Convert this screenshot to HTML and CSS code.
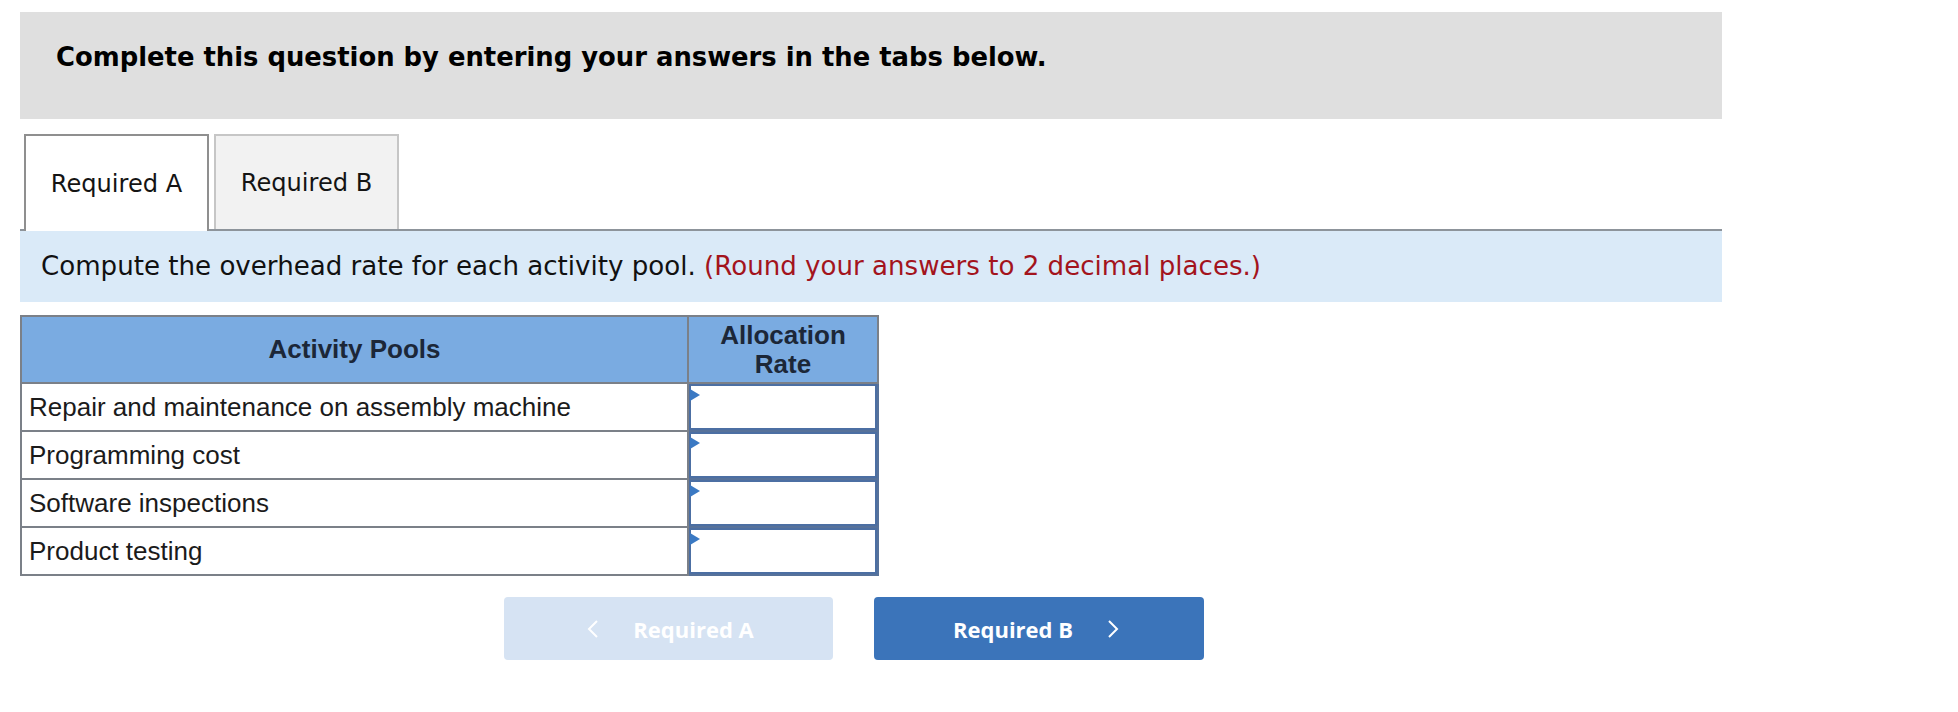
FILE: index.html
```html
<!DOCTYPE html>
<html lang="en">
<head>
<meta charset="utf-8">
<title>Activity Pools</title>
<link rel="stylesheet" href="styles.css">
</head>
<body>
<div class="page">
  <div class="banner">
    <h1 class="banner-title">Complete this question by entering your answers in the tabs below.</h1>
  </div>

  <div class="tabs">
    <div class="tab tab-active">Required A</div>
    <div class="tab">Required B</div>
  </div>

  <div class="instruction">Compute the overhead rate for each activity pool. <span class="note">(Round your answers to 2 decimal places.)</span></div>

  <table class="grid">
    <thead>
      <tr class="head-row">
        <th class="col-name">Activity Pools</th>
        <th class="col-rate">Allocation<br>Rate</th>
      </tr>
    </thead>
    <tbody>
      <tr class="body-row">
        <td class="name">Repair and maintenance on assembly machine</td>
        <td class="rate"><div class="inp"></div></td>
      </tr>
      <tr class="body-row">
        <td class="name">Programming cost</td>
        <td class="rate"><div class="inp"></div></td>
      </tr>
      <tr class="body-row">
        <td class="name">Software inspections</td>
        <td class="rate"><div class="inp"></div></td>
      </tr>
      <tr class="body-row">
        <td class="name">Product testing</td>
        <td class="rate"><div class="inp"></div></td>
      </tr>
    </tbody>
  </table>

  <div class="nav">
    <button class="nav-btn nav-prev" type="button">
      <svg class="chev" width="12" height="20" viewBox="0 0 12 20"><polyline points="10,2 2,10 10,18" fill="none" stroke="#ffffff" stroke-width="2"/></svg>
      <span>Required A</span>
    </button>
    <button class="nav-btn nav-next" type="button">
      <span>Required B</span>
      <svg class="chev" width="12" height="20" viewBox="0 0 12 20"><polyline points="2,2 10,10 2,18" fill="none" stroke="#ffffff" stroke-width="2"/></svg>
    </button>
  </div>
</div>
</body>
</html>
```

FILE: styles.css
```css
html, body {
  margin: 0;
  padding: 0;
  background: #ffffff;
}

.page {
  width: 1702px;
  margin-left: 20px;
  padding-top: 12px;
  font-family: "DejaVu Sans", Verdana, sans-serif;
  color: #1a1a1a;
}

.banner {
  background: #dfdfdf;
  height: 107px;
  box-sizing: border-box;
  padding: 29px 0 0 36px;
}

.banner-title {
  margin: 0;
  font-family: "DejaVu Sans", Verdana, sans-serif;
  font-weight: bold;
  font-size: 25.85px;
  line-height: 32px;
  color: #000000;
}

.tabs {
  display: flex;
  gap: 5px;
  padding-left: 4px;
  margin-top: 15px;
  height: 95px;
  border-bottom: 2px solid #8d949b;
}

.tab {
  width: 185px;
  box-sizing: border-box;
  display: flex;
  align-items: center;
  justify-content: center;
  font-size: 24.1px;
  color: #141414;
  background: #f2f2f2;
  border: 2px solid #c6c6c6;
  border-bottom: none;
}

.tab-active {
  background: #ffffff;
  border-color: #8f8f8f;
  height: 97px;
  margin-bottom: -2px;
}

.instruction {
  background: #daeaf8;
  height: 71px;
  line-height: 71px;
  padding-left: 21px;
  font-size: 26.1px;
  color: #111111;
  white-space: nowrap;
}

.note {
  color: #a3141d;
}

.grid {
  margin-top: 13px;
  border-collapse: collapse;
  width: 855px;
  table-layout: fixed;
  font-family: "Liberation Sans", Arial, sans-serif;
}

.col-name {
  width: 665px;
}

.col-rate {
  width: 188px;
}

.grid th {
  background: #7aabe1;
  border: 2px solid #7b8088;
  font-weight: bold;
  font-size: 26px;
  line-height: 29px;
  color: #1c2738;
  height: 65px;
  padding: 0;
  text-align: center;
}

.grid td {
  border: 2px solid #7b8088;
  font-size: 26px;
  color: #1b1b1b;
  height: 46px;
  padding: 0 7px;
  white-space: nowrap;
}

.grid td.rate {
  padding: 0;
  border-color: #57729a;
  vertical-align: top;
}

.inp {
  position: relative;
  height: 46px;
  box-sizing: border-box;
  border: 2px solid #4c6fa3;
  background: #ffffff;
}

.inp::before {
  content: "";
  position: absolute;
  left: -1px;
  top: 3px;
  border-left: 10px solid #3b79c3;
  border-top: 6px solid transparent;
  border-bottom: 6px solid transparent;
}

.nav {
  display: flex;
  gap: 41px;
  margin-top: 21px;
  padding-left: 484px;
}

.nav-btn {
  width: 329px;
  height: 63px;
  border: 0;
  border-radius: 4px;
  display: flex;
  align-items: center;
  justify-content: center;
  gap: 34px;
  font-family: "Open Sans", sans-serif;
  font-weight: bold;
  font-size: 22px;
  color: #ffffff;
  padding: 0;
}

.nav-prev {
  background: #d6e3f3;
  padding-left: 4px;
}

.nav-next {
  background: #3b74ba;
  width: 330px;
  padding-right: 6px;
}

.chev {
  display: block;
}
```
